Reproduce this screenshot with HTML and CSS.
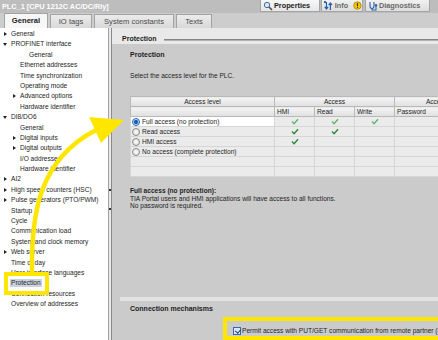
FILE: index.html
```html
<!DOCTYPE html>
<html lang="en">
<head>
<meta charset="UTF-8">
<title>PLC_1 [CPU 1212C AC/DC/Rly] - Protection</title>
<link rel="stylesheet" href="styles.css">
</head>
<body>

<div class="titlebar">
<span class="title">PLC_1 [CPU 1212C AC/DC/Rly]</span>
<ul class="viewtabs">
<li class="on vt-props">
<svg width="10" height="10" viewBox="0 0 10 10"><circle cx="4" cy="4" r="2.7" fill="#dbe8f6" stroke="#3d6fa6" stroke-width="1"/><path d="M6 6 L9 9" stroke="#4a4a4a" stroke-width="1.6"/></svg>
Properties</li>
<li class="vt-info">
<svg width="10" height="10" viewBox="0 0 10 10"><path d="M2.5 1 V8 M0.8 6 L2.5 8.2 L4.2 6" fill="none" stroke="#1f5fa8" stroke-width="1.2"/><path d="M6.5 9 V2 M4.8 4 L6.5 1.8 L8.2 4" fill="none" stroke="#1f5fa8" stroke-width="1.2"/><rect x="0" y="0" width="2" height="2" fill="#1f5fa8"/></svg>
Info
<svg class="warn" width="9" height="9" viewBox="0 0 9 9"><circle cx="4.5" cy="4.5" r="3.8" fill="#f4c400" stroke="#a88400" stroke-width="0.8"/><rect x="4" y="2" width="1" height="3.2" fill="#222"/><rect x="4" y="5.9" width="1" height="1" fill="#222"/></svg>
</li>
<li class="vt-diag">
<svg width="10" height="10" viewBox="0 0 10 10"><path d="M2 1 V5 Q2 7.5 4 7.5 Q6 7.5 6 5 V1" fill="none" stroke="#2d64aa" stroke-width="1.1"/><path d="M4 7.5 V9 H8 V5" fill="none" stroke="#2d64aa" stroke-width="1.1"/><circle cx="8" cy="4.3" r="1.2" fill="#2d64aa"/></svg>
Diagnostics</li>
</ul>
</div>

<ul class="tabs">
<li class="on tab-general">General</li>
<li class="tab-io">IO tags</li>
<li class="tab-sys">System constants</li>
<li class="tab-texts">Texts</li>
</ul>

<div class="main">
<ul class="tree">
<li class="l1 c">General</li>
<li class="l1 x">PROFINET interface</li>
<li class="l2 g">General</li>
<li class="l2">Ethernet addresses</li>
<li class="l2">Time synchronization</li>
<li class="l2">Operating mode</li>
<li class="l2 c">Advanced options</li>
<li class="l2">Hardware identifier</li>
<li class="l1 x">DI8/DO6</li>
<li class="l2">General</li>
<li class="l2 c">Digital inputs</li>
<li class="l2 c">Digital outputs</li>
<li class="l2">I/O addresses</li>
<li class="l2">Hardware identifier</li>
<li class="l1 c">AI2</li>
<li class="l1 c">High speed counters (HSC)</li>
<li class="l1 c">Pulse generators (PTO/PWM)</li>
<li class="l1">Startup</li>
<li class="l1">Cycle</li>
<li class="l1">Communication load</li>
<li class="l1">System and clock memory</li>
<li class="l1 c">Web server</li>
<li class="l1">Time of day</li>
<li class="l1">User interface languages</li>
<li class="l1"><span class="sel">Protection</span></li>
<li class="l1">Connection resources</li>
<li class="l1">Overview of addresses</li>
</ul>

<div class="splitter"><i></i><i></i></div>

<div class="content">
<div class="pagehead"><b>Protection</b><span class="rule"></span></div>

<div class="section">
<h2>Protection</h2>
<div class="body">
<p>Select the access level for the PLC.</p>
<table class="levels">
<colgroup>
<col class="c-level"><col class="c-narrow"><col class="c-narrow"><col class="c-narrow"><col class="c-pass">
</colgroup>
<thead>
<tr><th>Access level</th><th colspan="3">Access</th><th class="cut">Access</th></tr>
<tr class="sub"><th></th><th>HMI</th><th>Read</th><th>Write</th><th>Password</th></tr>
</thead>
<tbody>
<tr class="picked">
<td class="lvl"><span class="radio on"></span>Full access (no protection)</td>
<td class="ok"><svg width="8" height="7" viewBox="0 0 8 7"><path d="M1 3.6 L3.1 5.7 L7 1.2" fill="none" stroke-width="1.4"/></svg></td>
<td class="ok"><svg width="8" height="7" viewBox="0 0 8 7"><path d="M1 3.6 L3.1 5.7 L7 1.2" fill="none" stroke-width="1.4"/></svg></td>
<td class="ok"><svg width="8" height="7" viewBox="0 0 8 7"><path d="M1 3.6 L3.1 5.7 L7 1.2" fill="none" stroke-width="1.4"/></svg></td>
<td></td>
</tr>
<tr>
<td class="lvl"><span class="radio"></span>Read access</td>
<td class="ok"><svg width="8" height="7" viewBox="0 0 8 7"><path d="M1 3.6 L3.1 5.7 L7 1.2" fill="none" stroke-width="1.4"/></svg></td>
<td class="ok"><svg width="8" height="7" viewBox="0 0 8 7"><path d="M1 3.6 L3.1 5.7 L7 1.2" fill="none" stroke-width="1.4"/></svg></td>
<td></td><td></td>
</tr>
<tr>
<td class="lvl"><span class="radio"></span>HMI access</td>
<td class="ok"><svg width="8" height="7" viewBox="0 0 8 7"><path d="M1 3.6 L3.1 5.7 L7 1.2" fill="none" stroke-width="1.4"/></svg></td>
<td></td><td></td><td></td>
</tr>
<tr>
<td class="lvl"><span class="radio"></span>No access (complete protection)</td>
<td></td><td></td><td></td><td></td>
</tr>
<tr><td></td><td></td><td></td><td></td><td></td></tr>
<tr><td></td><td></td><td></td><td></td><td></td></tr>
</tbody>
</table>
<div class="note">
<b>Full access (no protection):</b>
TIA Portal users and HMI applications will have access to all functions.<br>
No password is required.
</div>
</div>
</div>

<div class="section conn">
<h2>Connection mechanisms</h2>
<div class="body">
<label class="permit"><span class="checkbox"></span>Permit access with PUT/GET communication from remote partner (PLC, HMI, OPC, ...)</label>
</div>
</div>
</div>
</div>

<!-- yellow call-outs drawn over the dialog -->
<div class="mark mark-tree"></div>
<div class="mark mark-putget"></div>
<svg class="arrow" width="438" height="340" viewBox="0 0 438 340">
<path d="M32 274 C31 215, 38 160, 96 130" fill="none" stroke="#ffe600" stroke-width="4.5"/>
<polygon points="124,120 89,117 101,143" fill="#ffe600"/>
</svg>

</body>
</html>
```

FILE: styles.css
```css
* {
	box-sizing: border-box;
}

html, body {
	margin: 0;
}

body {
	position: relative;
	width: 438px;
	height: 340px;
	overflow: hidden;
	background-color: #cdcdcd;
	color: #1e1e1e;
	font-family: "Liberation Sans", Arial, sans-serif;
	font-size: 6.6px;
}

ul {
	list-style: none;
	margin: 0;
	padding: 0;
}

/* title bar with the inspector tabs */
.titlebar {
	display: flex;
	height: 13px;
	background-color: #bdbdbd;
}

.title {
	padding-left: 2px;
	line-height: 13px;
	color: #fff;
	font-weight: bold;
	font-size: 7.3px;
}

.viewtabs {
	display: flex;
	height: 12px;
	margin-left: auto;
	margin-right: 8px;
}

.viewtabs li {
	display: flex;
	align-items: center;
	gap: 1px;
	padding-left: 2px;
	background: linear-gradient(#f1f1f1, #dcdcdc);
	border: 1px solid #a4a4a4;
	border-top: none;
	color: #6a6a6a;
	font-weight: bold;
	font-size: 7.3px;
}

.viewtabs li.on {
	background: linear-gradient(#f7f7f7, #e6e6e6);
	color: #222;
}

.viewtabs .warn {
	margin-left: 4px;
}

.vt-props { width: 60px; }
.vt-info { width: 42px; margin-left: 1px; }
.vt-diag { width: 65px; margin-left: 2px; }

/* editor tabs */
.tabs {
	display: flex;
	align-items: flex-end;
	gap: 2px;
	height: 15px;
	padding-left: 4px;
}

.tabs li {
	height: 14px;
	line-height: 13px;
	text-align: center;
	background: linear-gradient(#ececec, #d8d8d8);
	border: 1px solid #a3a3a3;
	border-bottom: none;
	color: #4a4a4a;
	font-size: 7.6px;
}

.tabs li.on {
	height: 15px;
	line-height: 14px;
	background: #f7f7f7;
	color: #222;
	font-weight: bold;
}

.tab-general { width: 44px; }
.tab-io { width: 42px; }
.tab-sys { width: 80px; }
.tab-texts { width: 36px; }

.main {
	display: flex;
	height: 312px;
}

/* navigation tree */
.tree {
	width: 108px;
	padding-top: 1px;
	background-color: #fff;
}

.tree li {
	position: relative;
	height: 10.4px;
	line-height: 10.4px;
	white-space: nowrap;
}

.tree .l1 { padding-left: 11px; }
.tree .l2 { padding-left: 20px; }
.tree .l2.g { padding-left: 29px; }

.tree .c::before,
.tree .x::before {
	content: "";
	position: absolute;
	top: 3px;
	width: 0;
	height: 0;
}

.tree .c::before {
	left: 4px;
	border-left: 3px solid #222;
	border-top: 2.5px solid transparent;
	border-bottom: 2.5px solid transparent;
}

.tree .x::before {
	left: 3px;
	top: 4px;
	border-top: 3px solid #222;
	border-left: 2.5px solid transparent;
	border-right: 2.5px solid transparent;
}

.tree .l2.c::before {
	left: 13px;
}

.tree .sel {
	display: inline-block;
	margin-left: -1px;
	padding: 0 1px;
	line-height: 8px;
	background-color: #ccd3de;
}

.splitter {
	display: flex;
	flex-direction: column;
	align-items: center;
	gap: 17px;
	width: 4px;
	padding-top: 161px;
	background-color: #e8e8e8;
	border-left: 1px solid #a0a0a0;
	border-right: 1px solid #8a8a8a;
}

.splitter i {
	width: 2px;
	height: 2px;
	background-color: #333;
}

/* property pages */
.content {
	display: flex;
	flex: 1;
	flex-direction: column;
	min-width: 0;
	overflow: hidden;
	background-color: #cbcbcb;
}

.pagehead {
	display: flex;
	align-items: flex-end;
	flex: none;
	height: 16px;
	padding: 0 0 1px 10px;
	background-color: #e9e9e9;
	font-size: 7px;
	line-height: 9px;
}

.pagehead .rule {
	flex: 1;
	height: 2px;
	margin: 0 0 2px 7px;
	background-color: #b2b2b2;
	border-top: 1px solid #858585;
}

.section {
	display: flex;
	flex: 1;
	flex-direction: column;
	margin: 2px 0 0 8px;
}

.section h2 {
	flex: none;
	height: 17px;
	margin: 0;
	padding-left: 10px;
	line-height: 17px;
	font-size: 7px;
}

.section .body {
	padding-left: 10px;
}

.section p {
	margin: 9px 0 16px;
	line-height: 8px;
}

.levels {
	table-layout: fixed;
	border-collapse: collapse;
	width: 348px;
	background-color: #ebebeb;
}

.c-level { width: 144px; }
.c-narrow { width: 40px; }
.c-pass { width: 84px; }

.levels th, .levels td {
	height: 10px;
	padding: 0 2px;
	border: 1px solid #d6d6d6;
	line-height: 8px;
	font-weight: normal;
	white-space: nowrap;
	overflow: hidden;
}

.levels thead th {
	background: linear-gradient(#f5f5f5, #dfdfdf);
	border-color: #b9b9b9;
	text-align: center;
}

.levels .sub th {
	text-align: left;
}

.levels .picked .lvl {
	background-color: #fff;
}

.levels .lvl {
	padding-left: 1px;
}

.levels .ok {
	text-align: center;
}

.levels .ok svg {
	display: block;
	margin: 0 auto;
	stroke: #2b8a38;
}

.levels .picked .ok svg {
	stroke: #62b36c;
}

.radio {
	display: inline-block;
	width: 8px;
	height: 8px;
	margin-right: 2px;
	vertical-align: -2px;
	border: 1px solid #8a8a8a;
	border-radius: 50%;
	background: radial-gradient(circle, #fdfdfd, #d9d9d9);
}

.radio.on {
	border-color: #2f63a8;
	background: radial-gradient(circle, #1c5fb8 0, #1c5fb8 1.8px, #bfe0fb 2.4px);
}

.note {
	margin-top: 10px;
	line-height: 7.7px;
}

.note b {
	display: block;
}

.section.conn {
	flex: none;
	height: 43px;
	margin-top: 0;
	border-top: 4px solid #e3e3e3;
}

.conn h2 {
	height: 16px;
	line-height: 16px;
}

.conn .body {
	padding: 10px 0 0 113px;
}

.permit {
	display: block;
	line-height: 8px;
	white-space: nowrap;
}

.checkbox {
	display: inline-block;
	position: relative;
	width: 8px;
	height: 8px;
	margin-right: 1px;
	vertical-align: -2px;
	border: 1px solid #3a69ab;
	background-color: #d9e8f8;
}

.checkbox::after {
	content: "";
	position: absolute;
	left: 1.5px;
	top: 0;
	width: 2.5px;
	height: 4px;
	border-right: 1.4px solid #12387a;
	border-bottom: 1.4px solid #12387a;
	transform: rotate(40deg);
}

/* yellow call-outs */
.mark {
	position: absolute;
	border: 4px solid #ffe600;
}

.mark-tree {
	left: 4px;
	top: 272px;
	width: 45px;
	height: 23px;
}

.mark-putget {
	left: 223px;
	top: 317px;
	width: 230px;
	height: 23px;
}

.arrow {
	position: absolute;
	left: 0;
	top: 0;
	pointer-events: none;
}
```
